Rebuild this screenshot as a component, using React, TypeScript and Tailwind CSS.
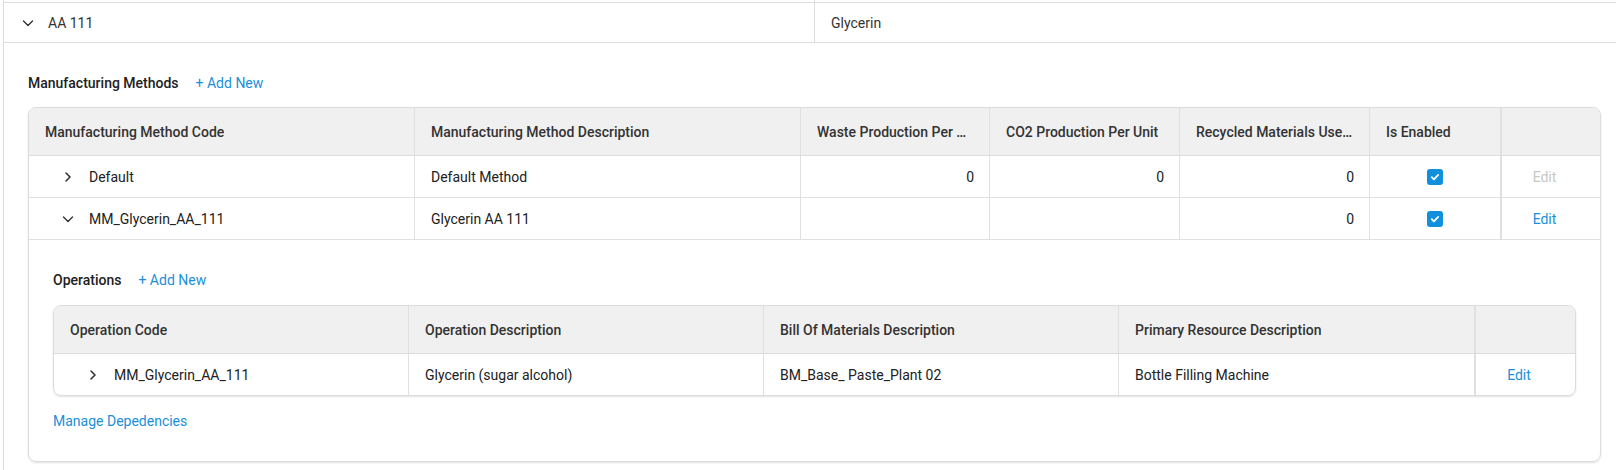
import React from "react";

const BLUE = "text-[#1a8fd9]";

function ChevronRight() {
  return (
    <svg width="16" height="16" viewBox="0 0 16 16" className="shrink-0">
      <path d="M6 4l4 4-4 4" fill="none" stroke="#333" strokeWidth="1.6" strokeLinecap="round" strokeLinejoin="round" />
    </svg>
  );
}

function ChevronDown() {
  return (
    <svg width="16" height="16" viewBox="0 0 16 16" className="shrink-0">
      <path d="M3.5 6l4.5 4.5L12.5 6" fill="none" stroke="#333" strokeWidth="1.4" strokeLinecap="round" strokeLinejoin="round" />
    </svg>
  );
}

function Check() {
  return (
    <span className="flex h-4 w-4 items-center justify-center rounded-[3px] bg-[#0f8fdc]">
      <svg width="12" height="12" viewBox="0 0 12 12">
        <path d="M2.8 6.2l2.1 2.1 4.3-4.4" fill="none" stroke="#fff" strokeWidth="1.8" strokeLinecap="round" strokeLinejoin="round" />
      </svg>
    </span>
  );
}

const mainCols = "grid grid-cols-[385px_386px_189px_190px_190px_131px_1fr]";
const opCols = "grid grid-cols-[354px_355px_355px_356px_1fr]";

function HeadCell({ children, first, last }: { children?: React.ReactNode; first?: boolean; last?: boolean }) {
  return (
    <div
      className={
        "flex h-[47px] min-w-0 items-center px-4 font-medium text-[#333] " +
        (first ? "" : last ? "border-l-2 border-[#e0e0e0]" : "border-l border-[#e0e0e0]")
      }
    >
      <span className="min-w-0 truncate">{children}</span>
    </div>
  );
}

function Cell({
  children,
  first,
  last,
  right,
  center,
}: {
  children?: React.ReactNode;
  first?: boolean;
  last?: boolean;
  right?: boolean;
  center?: boolean;
}) {
  return (
    <div
      className={
        "flex h-[41px] items-center text-[#212121] " +
        (last ? "pl-[10px] pr-[23px] " : right ? "pl-4 pr-[15px] " : "px-4 ") +
        (right ? "justify-end " : "") +
        (center ? "justify-center " : "") +
        (first ? "" : last ? "border-l-2 border-[#e0e0e0]" : "border-l border-[#e0e0e0]")
      }
    >
      {children}
    </div>
  );
}

export default function App() {
  return (
    <div className="h-[470px] w-[1616px] overflow-hidden bg-white font-[Roboto,sans-serif] text-sm text-[#212121]">
      <div className="ml-[3px] flex h-full flex-col border-l border-[#dcdcdc]">
        {/* row above (cut off) */}
        <div className="grid h-[2px] grid-cols-[810px_1fr]">
          <div />
          <div className="border-l border-[#dcdcdc]" />
        </div>
        {/* AA 111 row */}
        <div className="grid h-[41px] grid-cols-[810px_1fr] border-y border-[#dcdcdc]">
          <div className="flex items-center pl-4 text-[#333]">
            <ChevronDown />
            <span className="ml-3">AA 111</span>
          </div>
          <div className="flex items-center border-l border-[#dcdcdc] pl-4 text-[#333]">Glycerin</div>
        </div>

        {/* detail */}
        <div className="pl-6 pr-[15px] pt-[30px]">
          <div className="flex h-5 items-center">
            <span className="font-medium text-[#212121]">Manufacturing Methods</span>
            <span className={"ml-[17px] " + BLUE}>+ Add New</span>
          </div>

          <div className="mt-[14px] overflow-hidden rounded-lg border border-[#dcdcdc] shadow-[0_1px_2px_rgba(0,0,0,0.12)]">
            <div className={mainCols + " border-b border-[#dcdcdc] bg-[#f0f0f0]"}>
              <HeadCell first>Manufacturing Method Code</HeadCell>
              <HeadCell>Manufacturing Method Description</HeadCell>
              <HeadCell>Waste Production Per Unit</HeadCell>
              <HeadCell>CO2 Production Per Unit</HeadCell>
              <HeadCell>Recycled Materials Used Per Unit</HeadCell>
              <HeadCell>Is Enabled</HeadCell>
              <HeadCell last />
            </div>

            <div className={mainCols + " border-b border-[#e0e0e0]"}>
              <Cell first>
                <span className="flex items-center pl-[15px]">
                  <ChevronRight />
                  <span className="ml-[13px]">Default</span>
                </span>
              </Cell>
              <Cell>Default Method</Cell>
              <Cell right>0</Cell>
              <Cell right>0</Cell>
              <Cell right>0</Cell>
              <Cell center>
                <Check />
              </Cell>
              <Cell center last>
                <span className="text-[#c8c8c8]">Edit</span>
              </Cell>
            </div>

            <div className={mainCols + " border-b border-[#e0e0e0]"}>
              <Cell first>
                <span className="flex items-center pl-[15px]">
                  <ChevronDown />
                  <span className="ml-[13px]">MM_Glycerin_AA_111</span>
                </span>
              </Cell>
              <Cell>Glycerin AA 111</Cell>
              <Cell right />
              <Cell right />
              <Cell right>0</Cell>
              <Cell center>
                <Check />
              </Cell>
              <Cell center last>
                <span className={BLUE}>Edit</span>
              </Cell>
            </div>

            {/* nested detail */}
            <div className="px-6 pb-[30px] pt-[30px]">
              <div className="flex h-5 items-center">
                <span className="font-medium text-[#212121]">Operations</span>
                <span className={"ml-[17px] " + BLUE}>+ Add New</span>
              </div>

              <div className="mt-[15px] overflow-hidden rounded-lg border border-[#dcdcdc] shadow-[0_1px_2px_rgba(0,0,0,0.12)]">
                <div className={opCols + " border-b border-[#dcdcdc] bg-[#f0f0f0]"}>
                  <HeadCell first>Operation Code</HeadCell>
                  <HeadCell>Operation Description</HeadCell>
                  <HeadCell>Bill Of Materials Description</HeadCell>
                  <HeadCell>Primary Resource Description</HeadCell>
                  <HeadCell last />
                </div>
                <div className={opCols}>
                  <Cell first>
                    <span className="flex items-center pl-[15px]">
                      <ChevronRight />
                      <span className="ml-[13px]">MM_Glycerin_AA_111</span>
                    </span>
                  </Cell>
                  <Cell>Glycerin (sugar alcohol)</Cell>
                  <Cell>BM_Base_ Paste_Plant 02</Cell>
                  <Cell>Bottle Filling Machine</Cell>
                  <Cell center last>
                    <span className={BLUE}>Edit</span>
                  </Cell>
                </div>
              </div>

              <div className={"mt-[15px] flex h-5 items-center " + BLUE}>Manage Depedencies</div>
            </div>
          </div>
        </div>
      </div>
    </div>
  );
}
